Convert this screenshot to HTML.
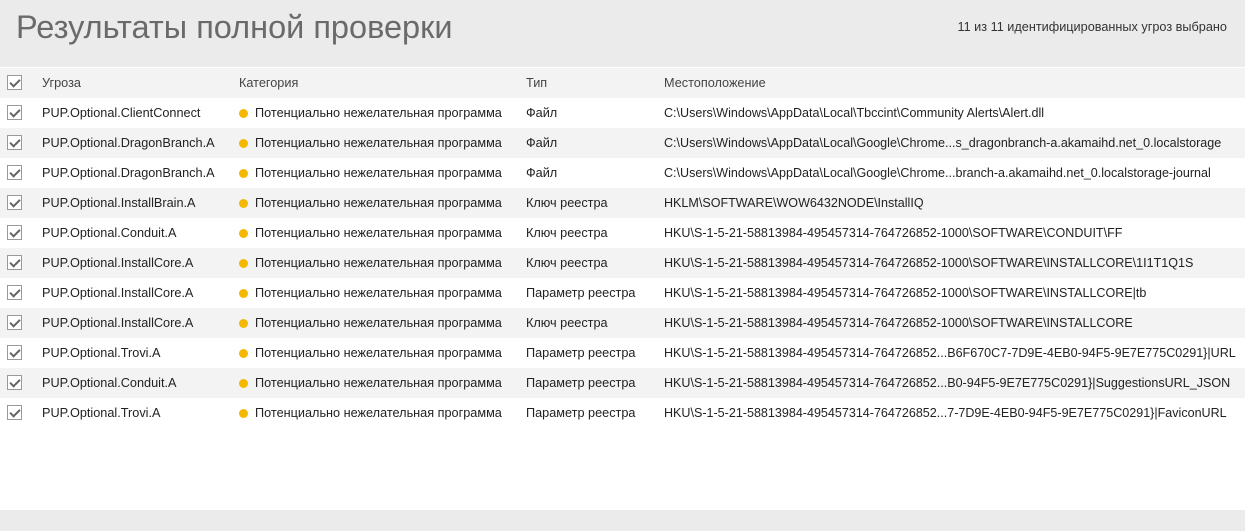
<html><head><style>
body{margin:0;width:1245px;height:531px;background:#fff;font-family:"Liberation Sans","DejaVu Sans",sans-serif;overflow:hidden;position:relative}
.hd{position:absolute;left:0;top:0;width:1245px;height:67px;background:#ebebeb}
.t{position:absolute;left:16px;top:9px;font-size:32.5px;color:#6a6a6a}
.s{position:absolute;right:18px;top:20px;font-size:12.7px;color:#333}
.row{position:absolute;left:0;width:1245px;height:30px;font-size:12.7px;color:#222}
.row span{position:absolute;top:8px;white-space:nowrap}
.row span.l{font-size:12.55px}
.g{background:#f3f3f3}
.cb{position:absolute;left:7px;top:7px;width:15px;height:15px;border:1px solid #999;background:#fff;box-sizing:border-box}
.cb:after{content:"";position:absolute;left:4px;top:1px;width:4px;height:8px;border:solid #666;border-width:0 2px 2px 0;transform:rotate(45deg)}
.d{position:absolute;left:239px;top:11px;width:9px;height:9px;border-radius:50%;background:#f5b800}
.bt{position:absolute;left:0;top:510px;width:1245px;height:21px;background:#ebebeb}
</style></head><body>
<div class="hd"><div class="t">Результаты полной проверки</div><div class="s">11 из 11 идентифицированных угроз выбрано</div></div>
<div class="row g" style="top:68px;color:#444"><div class="cb"></div><span style="left:42px">Угроза</span><span style="left:239px">Категория</span><span style="left:526px">Тип</span><span style="left:664px">Местоположение</span></div>
<div class="row" style="top:98px"><div class="cb"></div><span style="left:42px">PUP.Optional.ClientConnect</span><div class="d"></div><span style="left:255px">Потенциально нежелательная программа</span><span style="left:526px">Файл</span><span class="l" style="left:664px">C:\Users\Windows\AppData\Local\Tbccint\Community Alerts\Alert.dll</span></div>
<div class="row g" style="top:128px"><div class="cb"></div><span style="left:42px">PUP.Optional.DragonBranch.A</span><div class="d"></div><span style="left:255px">Потенциально нежелательная программа</span><span style="left:526px">Файл</span><span class="l" style="left:664px">C:\Users\Windows\AppData\Local\Google\Chrome...s_dragonbranch-a.akamaihd.net_0.localstorage</span></div>
<div class="row" style="top:158px"><div class="cb"></div><span style="left:42px">PUP.Optional.DragonBranch.A</span><div class="d"></div><span style="left:255px">Потенциально нежелательная программа</span><span style="left:526px">Файл</span><span class="l" style="left:664px">C:\Users\Windows\AppData\Local\Google\Chrome...branch-a.akamaihd.net_0.localstorage-journal</span></div>
<div class="row g" style="top:188px"><div class="cb"></div><span style="left:42px">PUP.Optional.InstallBrain.A</span><div class="d"></div><span style="left:255px">Потенциально нежелательная программа</span><span style="left:526px">Ключ реестра</span><span class="l" style="left:664px">HKLM\SOFTWARE\WOW6432NODE\InstallIQ</span></div>
<div class="row" style="top:218px"><div class="cb"></div><span style="left:42px">PUP.Optional.Conduit.A</span><div class="d"></div><span style="left:255px">Потенциально нежелательная программа</span><span style="left:526px">Ключ реестра</span><span class="l" style="left:664px">HKU\S-1-5-21-58813984-495457314-764726852-1000\SOFTWARE\CONDUIT\FF</span></div>
<div class="row g" style="top:248px"><div class="cb"></div><span style="left:42px">PUP.Optional.InstallCore.A</span><div class="d"></div><span style="left:255px">Потенциально нежелательная программа</span><span style="left:526px">Ключ реестра</span><span class="l" style="left:664px">HKU\S-1-5-21-58813984-495457314-764726852-1000\SOFTWARE\INSTALLCORE\1I1T1Q1S</span></div>
<div class="row" style="top:278px"><div class="cb"></div><span style="left:42px">PUP.Optional.InstallCore.A</span><div class="d"></div><span style="left:255px">Потенциально нежелательная программа</span><span style="left:526px">Параметр реестра</span><span class="l" style="left:664px">HKU\S-1-5-21-58813984-495457314-764726852-1000\SOFTWARE\INSTALLCORE|tb</span></div>
<div class="row g" style="top:308px"><div class="cb"></div><span style="left:42px">PUP.Optional.InstallCore.A</span><div class="d"></div><span style="left:255px">Потенциально нежелательная программа</span><span style="left:526px">Ключ реестра</span><span class="l" style="left:664px">HKU\S-1-5-21-58813984-495457314-764726852-1000\SOFTWARE\INSTALLCORE</span></div>
<div class="row" style="top:338px"><div class="cb"></div><span style="left:42px">PUP.Optional.Trovi.A</span><div class="d"></div><span style="left:255px">Потенциально нежелательная программа</span><span style="left:526px">Параметр реестра</span><span class="l" style="left:664px">HKU\S-1-5-21-58813984-495457314-764726852...B6F670C7-7D9E-4EB0-94F5-9E7E775C0291}|URL</span></div>
<div class="row g" style="top:368px"><div class="cb"></div><span style="left:42px">PUP.Optional.Conduit.A</span><div class="d"></div><span style="left:255px">Потенциально нежелательная программа</span><span style="left:526px">Параметр реестра</span><span class="l" style="left:664px">HKU\S-1-5-21-58813984-495457314-764726852...B0-94F5-9E7E775C0291}|SuggestionsURL_JSON</span></div>
<div class="row" style="top:398px"><div class="cb"></div><span style="left:42px">PUP.Optional.Trovi.A</span><div class="d"></div><span style="left:255px">Потенциально нежелательная программа</span><span style="left:526px">Параметр реестра</span><span class="l" style="left:664px">HKU\S-1-5-21-58813984-495457314-764726852...7-7D9E-4EB0-94F5-9E7E775C0291}|FaviconURL</span></div>
<div class="bt"></div>
</body></html>
